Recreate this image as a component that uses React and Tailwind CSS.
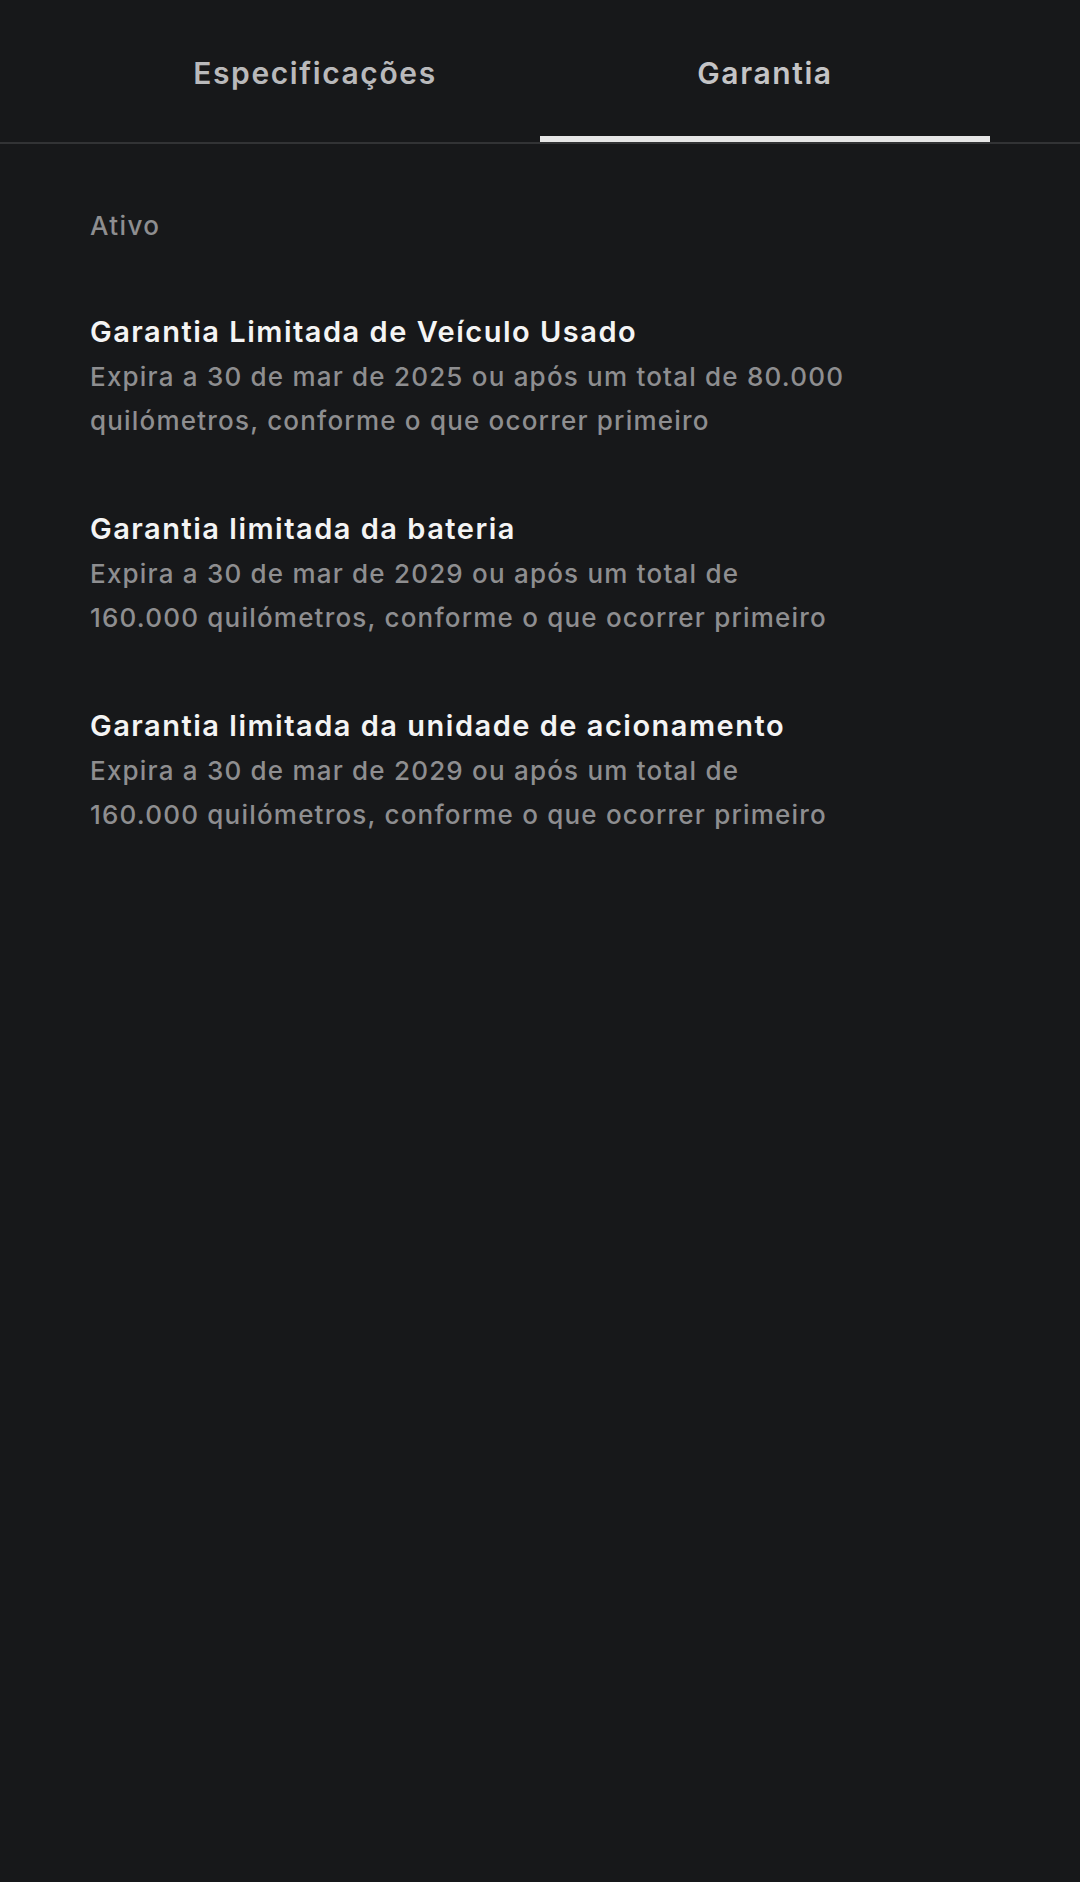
import React from "react";

const items = [
  {
    title: "Garantia Limitada de Veículo Usado",
    lines: [
      "Expira a 30 de mar de 2025 ou após um total de 80.000",
      "quilómetros, conforme o que ocorrer primeiro",
    ],
  },
  {
    title: "Garantia limitada da bateria",
    lines: [
      "Expira a 30 de mar de 2029 ou após um total de",
      "160.000 quilómetros, conforme o que ocorrer primeiro",
    ],
  },
  {
    title: "Garantia limitada da unidade de acionamento",
    lines: [
      "Expira a 30 de mar de 2029 ou após um total de",
      "160.000 quilómetros, conforme o que ocorrer primeiro",
    ],
  },
];

export default function App() {
  return (
    <div
      className="w-[1080px] h-[1882px] bg-[#17181a] overflow-hidden"
      style={{ fontFamily: "Inter, 'Noto Sans', sans-serif" }}
    >
      <div className="border-b-2 border-[#323335]">
        <div className="flex px-[90px]">
          <button className="flex-1 h-[142px] flex flex-col">
            <span className="flex-1 flex items-center justify-center text-[30px] font-semibold tracking-[1.6px] text-[#b9b9bb] pt-[10px]">
              Especificações
            </span>
            <span className="h-[6px] w-full"></span>
          </button>
          <button className="flex-1 h-[142px] flex flex-col">
            <span className="flex-1 flex items-center justify-center text-[30px] font-semibold tracking-[1.6px] text-[#c4c4c6] pt-[10px]">
              Garantia
            </span>
            <span className="h-[6px] w-full bg-[#e6e6e6]"></span>
          </button>
        </div>
      </div>
      <div className="px-[90px] pt-[62px] flex flex-col gap-[63px]">
        <div className="h-[40px] leading-[40px] text-[26px] font-medium tracking-[1.4px] text-[#8e8e90]">
          Ativo
        </div>
        {items.map((it) => (
          <div key={it.title} className="flex flex-col">
            <div className="leading-[46px] text-[29px] font-semibold tracking-[1.5px] text-[#f4f4f4]">
              {it.title}
            </div>
            {it.lines.map((l) => (
              <div key={l} className="leading-[44px] text-[26px] font-medium tracking-[1.2px] text-[#8e8e90]">
                {l}
              </div>
            ))}
          </div>
        ))}
      </div>
    </div>
  );
}
